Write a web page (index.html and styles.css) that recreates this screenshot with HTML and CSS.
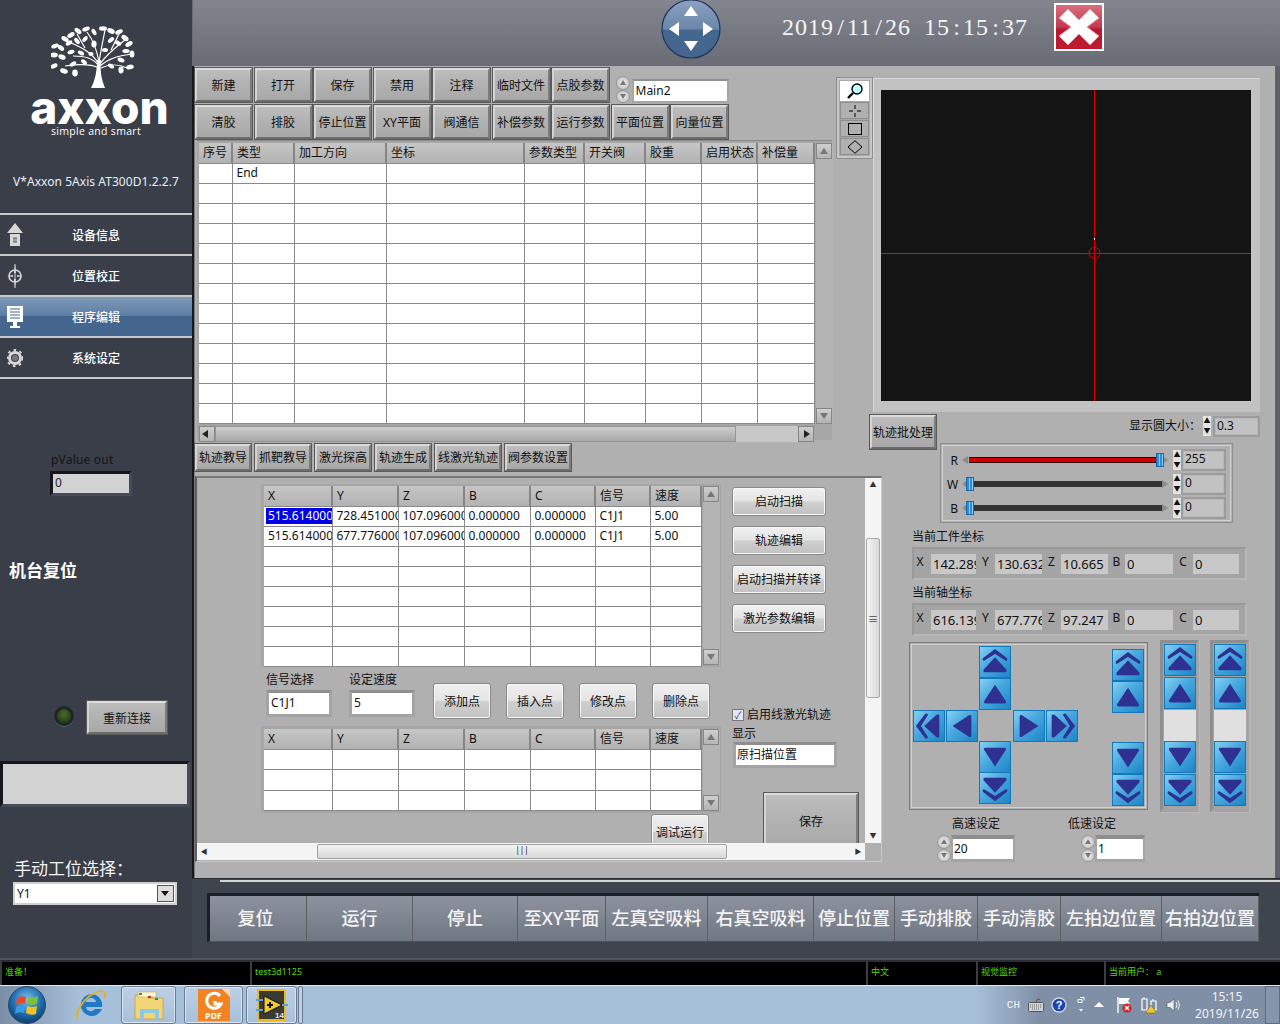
FILE: index.html
```html
<!DOCTYPE html>
<html lang="zh-CN">
<head>
  <meta charset="UTF-8">
  <title>Axxon 5Axis</title>
  <link rel="stylesheet" href="styles.css">
</head>
<body>

  <svg class="defs">
    <symbol id="arrow-one" viewBox="0 0 32 32">
      <path d="M16 6 L27.5 23.5 Q28.5 26 26 26 H6 Q3.5 26 4.5 23.5 Z" fill="#2e3192"/>
    </symbol>
    <symbol id="arrow-two" viewBox="0 0 32 32">
      <path d="M16 2 L29 12 Q30 14 28 15 L16 7.5 L4 15 Q2 14 3 12 Z" fill="#2e3192"/>
      <path d="M16 11 L28 24 Q29 27 27 27 H5 Q3 27 4 24 Z" fill="#2e3192"/>
    </symbol>
  </svg>

  <div class="app">
    <div class="upper">

      <aside class="side">
        <div class="logo">
          <svg class="tree" viewBox="0 0 84 62" width="84" height="62">
            <path d="M40 62 H54 C50 52 49 44 50 34 L46 34 C46 46 44 54 40 62 Z" fill="#fff"/>
            <g stroke="#fff" stroke-width="1.2" fill="none">
              <path d="M48 40 C42 32 34 30 22 30 M48 38 C40 26 32 22 18 16 M48 36 C46 24 42 14 36 6 M48 36 C50 24 52 14 54 4 M49 38 C56 28 64 22 74 14 M49 40 C58 32 68 30 80 28 M48 42 C40 38 28 38 14 40 M50 42 C58 38 68 38 76 42 M34 22 L26 8 M60 24 L68 8"/>
            </g>
            <g fill="#fff">
              <ellipse cx="14" cy="13" rx="4" ry="2.2" transform="rotate(30 14 13)"/>
              <ellipse cx="20" cy="9" rx="4" ry="2.2" transform="rotate(-30 20 9)"/>
              <ellipse cx="27" cy="5" rx="4" ry="2.2" transform="rotate(40 27 5)"/>
              <ellipse cx="35" cy="3" rx="4" ry="2.2" transform="rotate(-20 35 3)"/>
              <ellipse cx="43" cy="6" rx="3.5" ry="2" transform="rotate(60 43 6)"/>
              <ellipse cx="52" cy="2.5" rx="4" ry="2.2"/>
              <ellipse cx="60" cy="5" rx="4" ry="2.4" transform="rotate(25 60 5)"/>
              <ellipse cx="68" cy="6" rx="4" ry="2.2" transform="rotate(-25 68 6)"/>
              <ellipse cx="74" cy="12" rx="4" ry="2.4" transform="rotate(35 74 12)"/>
              <ellipse cx="78" cy="18" rx="4" ry="2.2" transform="rotate(-30 78 18)"/>
              <ellipse cx="81" cy="28" rx="2.4" ry="3.6"/>
              <ellipse cx="75" cy="25" rx="3.6" ry="2"/>
              <ellipse cx="67" cy="17" rx="3.6" ry="2" transform="rotate(30 67 17)"/>
              <ellipse cx="60" cy="14" rx="3.6" ry="2" transform="rotate(-40 60 14)"/>
              <ellipse cx="70" cy="34" rx="3.6" ry="2.2" transform="rotate(20 70 34)"/>
              <ellipse cx="79" cy="41" rx="3.8" ry="2.4" transform="rotate(-10 79 41)"/>
              <ellipse cx="70" cy="44" rx="2.6" ry="3.4"/>
              <ellipse cx="60" cy="40" rx="3.4" ry="2" transform="rotate(30 60 40)"/>
              <ellipse cx="4" cy="20" rx="4" ry="2.2" transform="rotate(-20 4 20)"/>
              <ellipse cx="10" cy="22" rx="3.6" ry="2.2" transform="rotate(40 10 22)"/>
              <ellipse cx="18" cy="17" rx="3.6" ry="2" transform="rotate(-30 18 17)"/>
              <ellipse cx="26" cy="15" rx="3.6" ry="2" transform="rotate(50 26 15)"/>
              <ellipse cx="34" cy="13" rx="3.4" ry="2" transform="rotate(-50 34 13)"/>
              <ellipse cx="3" cy="29" rx="3.8" ry="2.4"/>
              <ellipse cx="11" cy="31" rx="3.8" ry="2.4" transform="rotate(25 11 31)"/>
              <ellipse cx="20" cy="26" rx="3.6" ry="2" transform="rotate(-20 20 26)"/>
              <ellipse cx="30" cy="27" rx="3.4" ry="2" transform="rotate(30 30 27)"/>
              <ellipse cx="3" cy="40" rx="3.8" ry="2.2" transform="rotate(-25 3 40)"/>
              <ellipse cx="13" cy="45" rx="4" ry="2.4" transform="rotate(20 13 45)"/>
              <ellipse cx="22" cy="38" rx="3.6" ry="2" transform="rotate(-30 22 38)"/>
              <ellipse cx="24" cy="47" rx="2.8" ry="3.4"/>
              <ellipse cx="33" cy="36" rx="3.4" ry="2" transform="rotate(40 33 36)"/>
              <ellipse cx="43" cy="18" rx="2.6" ry="3.6"/>
              <ellipse cx="54" cy="24" rx="3" ry="2"/>
              <ellipse cx="40" cy="28" rx="2.6" ry="2"/>
            </g>
          </svg>
          <div class="brand">axxon</div>
          <div class="tagline">simple and smart</div>
        </div>

        <div class="version">V*Axxon 5Axis AT300D1.2.2.7</div>

        <nav class="menu">
          <div class="menu-row">
            <svg class="menu-icon" viewBox="0 0 16 24" width="16" height="24">
              <path d="M8 0 L16 10 H0 Z M3 11 H13 V23 H3 Z" fill="#d8d8d8"/>
              <path d="M6 14 H10 V20 H6 Z M8 14 V20 M6 17 H10" fill="#39404a" stroke="#d8d8d8" stroke-width=".8"/>
            </svg>
            <span>设备信息</span>
          </div>
          <div class="menu-row">
            <svg class="menu-icon" viewBox="0 0 16 24" width="16" height="24">
              <circle cx="8" cy="12" r="6" fill="none" stroke="#d8d8d8" stroke-width="1.6"/>
              <path d="M8 0 L9 9 H7 Z M8 24 L9 15 H7 Z M0 12 L6 11 V13 Z M16 12 L10 11 V13 Z" fill="#d8d8d8"/>
              <path d="M8 0 V24" stroke="#d8d8d8"/>
            </svg>
            <span>位置校正</span>
          </div>
          <div class="menu-row menu-row-on">
            <svg class="menu-icon" viewBox="0 0 16 22" width="16" height="22">
              <path d="M0 0 H16 V16 H0 Z" fill="#fff"/>
              <path d="M3 3 H13 M3 6 H13 M3 9 H13 M3 12 H13" stroke="#44668f"/>
              <path d="M6 16 H10 V20 H6 Z M3 20 H13 V22 H3 Z" fill="#fff"/>
            </svg>
            <span>程序编辑</span>
          </div>
          <div class="menu-row">
            <svg class="menu-icon" viewBox="0 0 16 22" width="16" height="22">
              <circle cx="8" cy="11" r="5.5" fill="none" stroke="#d8d8d8" stroke-width="3"/>
              <circle cx="8" cy="11" r="8" fill="none" stroke="#d8d8d8" stroke-width="2" stroke-dasharray="2.6 3.4"/>
              <circle cx="8" cy="11" r="3" fill="#767676"/>
            </svg>
            <span>系统设定</span>
          </div>
        </nav>

        <div class="pvalue">
          <div class="pvalue-label">pValue out</div>
          <div class="pvalue-field">0</div>
        </div>

        <div class="reset-title">机台复位</div>

        <div class="connect">
          <div class="led"></div>
          <button class="btn connect-btn">重新连接</button>
        </div>

        <div class="blank-display"></div>

        <div class="station-label">手动工位选择：</div>
        <div class="station-select">
          <span>Y1</span>
          <span class="station-arrow"></span>
        </div>
      </aside>

      <main class="work">
        <header class="topbar">
          <svg class="nav-ball" viewBox="0 0 60 60" width="60" height="60">
            <defs>
              <linearGradient id="ballTop" x1="0" y1="0" x2="0" y2="1">
                <stop offset="0" stop-color="#8ca2bf"/>
                <stop offset=".5" stop-color="#6a87aa"/>
                <stop offset=".52" stop-color="#44668f"/>
                <stop offset="1" stop-color="#44668f"/>
              </linearGradient>
            </defs>
            <circle cx="30" cy="30" r="29" fill="url(#ballTop)" stroke="#1e3560" stroke-width="1.2"/>
            <path d="M30 7 L37 17 H23 Z M30 52 L37 42 H23 Z M8 30 L18 23 V37 Z M52 30 L42 23 V37 Z" fill="#fff"/>
          </svg>
          <div class="clock">2019<span class="sep">/</span>11<span class="sep">/</span>26<span class="gap"></span>15<span class="sep">:</span>15<span class="sep">:</span>37</div>
          <svg class="close-btn" viewBox="0 0 50 48" width="50" height="48">
            <defs>
              <linearGradient id="closeFill" x1="0" y1="0" x2="0" y2="1">
                <stop offset="0" stop-color="#d9707f"/>
                <stop offset=".5" stop-color="#c43a50"/>
                <stop offset=".55" stop-color="#b8182e"/>
                <stop offset="1" stop-color="#c01a30"/>
              </linearGradient>
            </defs>
            <rect x="1" y="1" width="48" height="46" fill="url(#closeFill)" stroke="#fff" stroke-width="2"/>
            <path d="M14 6 L25 17 L36 6 L45 15 L33 24 L45 33 L36 42 L25 31 L14 42 L5 33 L17 24 L5 15 Z" fill="#fff" stroke="#e8a0aa" stroke-width="1" stroke-linejoin="round"/>
          </svg>
        </header>

        <div class="panel">

          <section class="prog">
            <div class="tool-grid">
              <button class="btn">新建</button>
              <button class="btn">打开</button>
              <button class="btn">保存</button>
              <button class="btn">禁用</button>
              <button class="btn">注释</button>
              <button class="btn">临时文件</button>
              <button class="btn">点胶参数</button>
              <div class="prog-name">
                <div class="spin-round"><span></span><span></span></div>
                <div class="name-field">Main2</div>
              </div>
              <button class="btn">清胶</button>
              <button class="btn">排胶</button>
              <button class="btn">停止位置</button>
              <button class="btn">XY平面</button>
              <button class="btn">阀通信</button>
              <button class="btn">补偿参数</button>
              <button class="btn">运行参数</button>
              <button class="btn">平面位置</button>
              <button class="btn">向量位置</button>
            </div>

            <div class="table-frame prog-frame">
              <div class="table-wrap">
                <table class="grid-table prog-table">
                  <thead>
                    <tr><th>序号</th><th>类型</th><th>加工方向</th><th>坐标</th><th>参数类型</th><th>开关阀</th><th>胶重</th><th>启用状态</th><th>补偿量</th></tr>
                  </thead>
                  <tbody>
                    <tr><td></td><td>End</td><td></td><td></td><td></td><td></td><td></td><td></td><td></td></tr>
                    <tr><td></td><td></td><td></td><td></td><td></td><td></td><td></td><td></td><td></td></tr>
                    <tr><td></td><td></td><td></td><td></td><td></td><td></td><td></td><td></td><td></td></tr>
                    <tr><td></td><td></td><td></td><td></td><td></td><td></td><td></td><td></td><td></td></tr>
                    <tr><td></td><td></td><td></td><td></td><td></td><td></td><td></td><td></td><td></td></tr>
                    <tr><td></td><td></td><td></td><td></td><td></td><td></td><td></td><td></td><td></td></tr>
                    <tr><td></td><td></td><td></td><td></td><td></td><td></td><td></td><td></td><td></td></tr>
                    <tr><td></td><td></td><td></td><td></td><td></td><td></td><td></td><td></td><td></td></tr>
                    <tr><td></td><td></td><td></td><td></td><td></td><td></td><td></td><td></td><td></td></tr>
                    <tr><td></td><td></td><td></td><td></td><td></td><td></td><td></td><td></td><td></td></tr>
                    <tr><td></td><td></td><td></td><td></td><td></td><td></td><td></td><td></td><td></td></tr>
                    <tr><td></td><td></td><td></td><td></td><td></td><td></td><td></td><td></td><td></td></tr>
                    <tr><td></td><td></td><td></td><td></td><td></td><td></td><td></td><td></td><td></td></tr>
                  </tbody>
                </table>
                <div class="vbar">
                  <div class="bar-btn bar-up"></div>
                  <div class="bar-btn bar-down"></div>
                </div>
              </div>
              <div class="hbar-big">
                <div class="bar-btn bar-left"></div>
                <div class="hbar-thumb"></div>
                <div class="bar-btn bar-right"></div>
              </div>
            </div>

            <div class="tabs">
              <button class="btn tab">轨迹教导</button>
              <button class="btn tab">抓靶教导</button>
              <button class="btn tab">激光探高</button>
              <button class="btn tab">轨迹生成</button>
              <button class="btn tab tab-wide">线激光轨迹</button>
              <button class="btn tab tab-wide">阀参数设置</button>
            </div>
          </section>

          <section class="viewer">
            <div class="palette">
              <div class="pal-item pal-on">
                <svg viewBox="0 0 18 18" width="18" height="18"><circle cx="11" cy="7" r="5" fill="#bff" stroke="#000" stroke-width="1.4"/><path d="M7 11 L2 16" stroke="#000" stroke-width="2.4"/></svg>
              </div>
              <div class="pal-item">
                <svg viewBox="0 0 14 14" width="14" height="14"><path d="M7 1 V5 M7 9 V13 M1 7 H5 M9 7 H13" stroke="#000"/></svg>
              </div>
              <div class="pal-item">
                <svg viewBox="0 0 14 12" width="14" height="12"><rect x=".5" y=".5" width="13" height="11" fill="none" stroke="#000"/></svg>
              </div>
              <div class="pal-item">
                <svg viewBox="0 0 16 14" width="16" height="14"><path d="M8 .7 L15 7 L8 13.3 L1 7 Z" fill="none" stroke="#000"/></svg>
              </div>
            </div>
            <div class="graph-frame">
              <svg class="graph" viewBox="0 0 370 311" width="370" height="311">
                <rect width="370" height="311" fill="#141414"/>
                <path d="M0 163.5 H370" stroke="#4c4c4c"/>
                <path d="M213.5 0 V311" stroke="#e00000"/>
                <circle cx="213.5" cy="163" r="5.5" fill="none" stroke="#e00000"/>
                <path d="M206 163.5 H221" stroke="#e00000"/>
                <rect x="213" y="148" width="1" height="2" fill="#eee"/>
              </svg>
            </div>
          </section>

          <section class="tabview">
            <div class="tabview-main">
              <div class="tab-content">
                <div class="tab-left">
                  <div class="table-frame points-frame">
                    <table class="grid-table points-table">
                      <thead>
                        <tr><th>X</th><th>Y</th><th>Z</th><th>B</th><th>C</th><th>信号</th><th>速度</th></tr>
                      </thead>
                      <tbody>
                        <tr><td><span class="cell-on">515.614000</span></td><td>728.451000</td><td>107.096000</td><td>0.000000</td><td>0.000000</td><td>C1J1</td><td>5.00</td></tr>
                        <tr><td>515.614000</td><td>677.776000</td><td>107.096000</td><td>0.000000</td><td>0.000000</td><td>C1J1</td><td>5.00</td></tr>
                        <tr><td></td><td></td><td></td><td></td><td></td><td></td><td></td></tr>
                        <tr><td></td><td></td><td></td><td></td><td></td><td></td><td></td></tr>
                        <tr><td></td><td></td><td></td><td></td><td></td><td></td><td></td></tr>
                        <tr><td></td><td></td><td></td><td></td><td></td><td></td><td></td></tr>
                        <tr><td></td><td></td><td></td><td></td><td></td><td></td><td></td></tr>
                        <tr><td></td><td></td><td></td><td></td><td></td><td></td><td></td></tr>
                      </tbody>
                    </table>
                    <div class="vbar">
                      <div class="bar-btn bar-up"></div>
                      <div class="bar-btn bar-down"></div>
                    </div>
                  </div>

                  <div class="point-form">
                    <div class="form-group">
                      <label>信号选择</label>
                      <div class="form-field">C1J1</div>
                    </div>
                    <div class="form-group">
                      <label>设定速度</label>
                      <div class="form-field">5</div>
                    </div>
                    <button class="sys-btn point-btn point-first">添加点</button>
                    <button class="sys-btn point-btn">插入点</button>
                    <button class="sys-btn point-btn">修改点</button>
                    <button class="sys-btn point-btn">删除点</button>
                  </div>

                  <div class="table-frame points-frame small-frame">
                    <table class="grid-table points-table">
                      <thead>
                        <tr><th>X</th><th>Y</th><th>Z</th><th>B</th><th>C</th><th>信号</th><th>速度</th></tr>
                      </thead>
                      <tbody>
                        <tr><td></td><td></td><td></td><td></td><td></td><td></td><td></td></tr>
                        <tr><td></td><td></td><td></td><td></td><td></td><td></td><td></td></tr>
                        <tr><td></td><td></td><td></td><td></td><td></td><td></td><td></td></tr>
                      </tbody>
                    </table>
                    <div class="vbar">
                      <div class="bar-btn bar-up"></div>
                      <div class="bar-btn bar-down"></div>
                    </div>
                  </div>

                  <button class="sys-btn point-btn debug-btn">调试运行</button>
                </div>

                <div class="tab-right">
                  <button class="sys-btn scan-btn">启动扫描</button>
                  <button class="sys-btn scan-btn">轨迹编辑</button>
                  <button class="sys-btn scan-btn">启动扫描并转译</button>
                  <button class="sys-btn scan-btn">激光参数编辑</button>
                  <div class="check-row"><span class="check-box">✓</span>启用线激光轨迹</div>
                  <div class="show-label">显示</div>
                  <div class="show-field">原扫描位置</div>
                  <button class="btn save-btn">保存</button>
                </div>
              </div>
              <div class="vbar-light">
                <span class="mini-arrow">▲</span>
                <div class="vbar-thumb">≡</div>
                <span class="mini-arrow">▼</span>
              </div>
            </div>
            <div class="hbar-light">
              <span class="mini-arrow">◀</span>
              <div class="hbar-light-thumb">|||</div>
              <span class="mini-arrow">▶</span>
            </div>
          </section>

          <section class="controls">
            <div class="ctrl-head">
              <button class="btn batch-btn">轨迹批处理</button>
              <span class="circle-label">显示圆大小：</span>
              <div class="spin-small"><span>▲</span><span>▼</span></div>
              <div class="ghost-field circle-field">0.3</div>
            </div>

            <div class="rgb-box">
              <div class="rgb-row">
                <span class="rgb-name">R</span>
                <span class="tri tri-l"></span>
                <div class="slider slider-full"><span class="thumb"></span></div>
                <span class="tri tri-r"></span>
                <div class="spin-small"><span>▲</span><span>▼</span></div>
                <div class="ghost-field rgb-field">255</div>
              </div>
              <div class="rgb-row">
                <span class="rgb-name">W</span>
                <span class="tri tri-l"></span>
                <div class="slider"><span class="thumb"></span></div>
                <span class="tri tri-r"></span>
                <div class="spin-small"><span>▲</span><span>▼</span></div>
                <div class="ghost-field rgb-field">0</div>
              </div>
              <div class="rgb-row">
                <span class="rgb-name">B</span>
                <span class="tri tri-l"></span>
                <div class="slider"><span class="thumb"></span></div>
                <span class="tri tri-r"></span>
                <div class="spin-small"><span>▲</span><span>▼</span></div>
                <div class="ghost-field rgb-field">0</div>
              </div>
            </div>

            <div class="coord-title">当前工件坐标</div>
            <div class="coord-box">
              <span>X</span><div class="coord-val">142.289</div>
              <span>Y</span><div class="coord-val">130.632</div>
              <span>Z</span><div class="coord-val">10.665</div>
              <span>B</span><div class="coord-val">0</div>
              <span>C</span><div class="coord-val">0</div>
            </div>
            <div class="coord-title coord-title-2">当前轴坐标</div>
            <div class="coord-box">
              <span>X</span><div class="coord-val">616.139</div>
              <span>Y</span><div class="coord-val">677.776</div>
              <span>Z</span><div class="coord-val">97.247</div>
              <span>B</span><div class="coord-val">0</div>
              <span>C</span><div class="coord-val">0</div>
            </div>

            <div class="jog-row">
              <div class="jog-pad">
                <div class="jog-cross">
                  <div class="jog jog-n2"><svg class="up"><use href="#arrow-two"/></svg></div>
                  <div class="jog jog-n1"><svg class="up"><use href="#arrow-one"/></svg></div>
                  <div class="jog jog-w2"><svg class="left"><use href="#arrow-two"/></svg></div>
                  <div class="jog jog-w1"><svg class="left"><use href="#arrow-one"/></svg></div>
                  <div class="jog jog-e1"><svg class="right"><use href="#arrow-one"/></svg></div>
                  <div class="jog jog-e2"><svg class="right"><use href="#arrow-two"/></svg></div>
                  <div class="jog jog-s1"><svg class="down"><use href="#arrow-one"/></svg></div>
                  <div class="jog jog-s2"><svg class="down"><use href="#arrow-two"/></svg></div>
                </div>
                <div class="jog-col">
                  <div class="jog"><svg class="up"><use href="#arrow-two"/></svg></div>
                  <div class="jog"><svg class="up"><use href="#arrow-one"/></svg></div>
                  <div class="jog-gap"></div>
                  <div class="jog"><svg class="down"><use href="#arrow-one"/></svg></div>
                  <div class="jog"><svg class="down"><use href="#arrow-two"/></svg></div>
                </div>
              </div>
              <div class="jog-strip">
                <div class="jog"><svg class="up"><use href="#arrow-two"/></svg></div>
                <div class="jog"><svg class="up"><use href="#arrow-one"/></svg></div>
                <div class="strip-mid"></div>
                <div class="jog"><svg class="down"><use href="#arrow-one"/></svg></div>
                <div class="jog"><svg class="down"><use href="#arrow-two"/></svg></div>
              </div>
              <div class="jog-strip jog-strip-2">
                <div class="jog"><svg class="up"><use href="#arrow-two"/></svg></div>
                <div class="jog"><svg class="up"><use href="#arrow-one"/></svg></div>
                <div class="strip-mid"></div>
                <div class="jog"><svg class="down"><use href="#arrow-one"/></svg></div>
                <div class="jog"><svg class="down"><use href="#arrow-two"/></svg></div>
              </div>
            </div>

            <div class="speed-row">
              <div class="speed speed-high">
                <div class="speed-label">高速设定</div>
                <div class="speed-input">
                  <div class="spin-round"><span></span><span></span></div>
                  <div class="speed-field">20</div>
                </div>
              </div>
              <div class="speed speed-low">
                <div class="speed-label">低速设定</div>
                <div class="speed-input">
                  <div class="spin-round"><span></span><span></span></div>
                  <div class="speed-field">1</div>
                </div>
              </div>
            </div>
          </section>
        </div>

        <footer class="actionbar">
          <div class="action-line"></div>
          <div class="action-box">
            <div class="action">复位</div>
            <div class="action">运行</div>
            <div class="action">停止</div>
            <div class="action">至XY平面</div>
            <div class="action">左真空吸料</div>
            <div class="action">右真空吸料</div>
            <div class="action">停止位置</div>
            <div class="action">手动排胶</div>
            <div class="action">手动清胶</div>
            <div class="action">左拍边位置</div>
            <div class="action">右拍边位置</div>
          </div>
        </footer>
      </main>
    </div>

    <div class="statusbar">
      <div class="status">准备！</div>
      <div class="status">test3d1125</div>
      <div class="status">中文</div>
      <div class="status">视觉监控</div>
      <div class="status">当前用户： a</div>
    </div>

    <div class="taskbar">
      <svg class="start-orb" viewBox="0 0 38 38" width="38" height="38">
        <defs>
          <radialGradient id="orb" cx=".5" cy=".35" r=".7">
            <stop offset="0" stop-color="#7ec0ea"/>
            <stop offset=".55" stop-color="#1e6fb0"/>
            <stop offset="1" stop-color="#0a3560"/>
          </radialGradient>
        </defs>
        <circle cx="19" cy="19" r="18.5" fill="url(#orb)" stroke="#2c4a66"/>
        <path d="M9 12 Q13 9 18 11 L17 18 Q12 16 8 19 Z" fill="#e8482c"/>
        <path d="M20 11 Q25 13 30 10 L29 18 Q24 20 19 18 Z" fill="#7cc23c"/>
        <path d="M8 21 Q12 18 17 20 L16 27 Q11 25 7 28 Z" fill="#3a9ae8"/>
        <path d="M19 20 Q24 22 29 20 L28 28 Q23 30 18 27 Z" fill="#f4c020"/>
      </svg>
      <svg class="ie-icon" viewBox="0 0 34 34" width="34" height="34">
        <path d="M18 6 A11 11 0 1 0 29 21 H22 A5 5 0 0 1 13 19 H29 A11 11 0 0 0 18 6 Z M13 14 A5 4 0 0 1 23 14 Z" fill="#1f78c8" fill-rule="evenodd"/>
        <path d="M5 31 C0 28 10 10 22 5 C30 1 34 4 31 10" fill="none" stroke="#e8b020" stroke-width="1.8"/>
      </svg>
      <div class="task-tile task-folder">
        <svg viewBox="0 0 30 32" width="30" height="32">
          <path d="M1 6 H12 L14 9 H29 V30 H1 Z" fill="#f2d676" stroke="#c8a850"/>
          <path d="M4 3 H22 V8 H4 Z" fill="#fff7d8" stroke="#c8a850" stroke-width=".6"/>
          <path d="M5 4 H8 V6 H5 Z" fill="#20a040"/>
          <path d="M14 7 H17 V9 H14 Z" fill="#d03030"/>
          <path d="M21 9 H24 V11 H21 Z" fill="#2080d0"/>
          <path d="M6 20 H25 V30 H21 V24 H10 V30 H6 Z" fill="#8cc8e8"/>
        </svg>
      </div>
      <div class="task-tile task-pdf">
        <div class="pdf-icon">
          <svg viewBox="0 0 32 22" width="32" height="22">
            <path d="M24 0 H32 V8 Z" fill="#fbd7b0"/>
            <path d="M22 7 A7.5 7.5 0 1 0 23 15 H17 V12" fill="none" stroke="#fff" stroke-width="3"/>
          </svg>
          <span>PDF</span>
        </div>
      </div>
      <div class="task-tile task-lv">
        <svg viewBox="0 0 32 32" width="32" height="32">
          <rect x="2" y="1" width="27" height="30" fill="#3a3a34" stroke="#f0b818" stroke-width="2"/>
          <path d="M8 7 L26 16 L8 25 Z" fill="#f0c830" stroke="#111"/>
          <path d="M14 13 V19 M11 16 H17" stroke="#111" stroke-width="2"/>
          <path d="M0 11 H7 M0 21 H7 M26 16 H32" stroke="#5aa0d8" stroke-width="2"/>
          <text x="19" y="29" class="lv-num">14</text>
        </svg>
      </div>
      <div class="task-end"></div>

      <div class="tray">
        <span class="tray-lang">CH</span>
        <svg viewBox="0 0 16 14" width="16" height="14"><rect x=".5" y="4.5" width="15" height="9" rx="1" fill="#d0d4da" stroke="#555"/><path d="M2 7 H14 M2 9 H14 M4 11 H12" stroke="#666" stroke-dasharray="1 1"/><path d="M8 4 Q8 1 12 1" stroke="#555" fill="none"/></svg>
        <svg viewBox="0 0 16 16" width="16" height="16"><circle cx="8" cy="8" r="7" fill="#1c44b0" stroke="#cfd6e4" stroke-width="1.4"/><text x="8" y="12" class="help-q">?</text></svg>
        <svg viewBox="0 0 8 16" width="8" height="16"><path d="M1 2.5 H5 V5.5 H1 Z M3 .5 H7 V3.5" fill="none" stroke="#fff"/><path d="M2 12 H6 L4 14.5 Z" fill="#fff"/></svg>
        <svg viewBox="0 0 10 6" width="10" height="6"><path d="M5 0 L10 5 H0 Z" fill="#fff"/></svg>
        <svg viewBox="0 0 16 18" width="16" height="18"><path d="M2 1 V17" stroke="#fff" stroke-width="1.4"/><path d="M3 2 H14 L12 5 L14 8 H3 Z" fill="#fff"/><circle cx="11" cy="12" r="4.6" fill="#d82020"/><path d="M9 10 L13 14 M13 10 L9 14" stroke="#fff" stroke-width="1.4"/></svg>
        <svg viewBox="0 0 16 18" width="16" height="18"><path d="M1 3 H6 V14 H1 Z M10 5 H15 V14 H10 Z" fill="none" stroke="#fff" stroke-width="1.2"/><path d="M3 1 V3 M12 3 V5" stroke="#fff"/><path d="M10 9 L15.5 17 H4.5 Z" fill="#f0c820" stroke="#555" stroke-width=".5"/></svg>
        <svg viewBox="0 0 16 16" width="16" height="16"><path d="M1 5.5 H4 L8 2 V14 L4 10.5 H1 Z" fill="#e8edf3" stroke="#555" stroke-width=".6"/><path d="M10 5 Q12 8 10 11 M12 3.5 Q15 8 12 12.5" fill="none" stroke="#e8edf3"/></svg>
        <div class="tray-clock">
          <div>15:15</div>
          <div>2019/11/26</div>
        </div>
      </div>
      <div class="show-desktop"></div>
    </div>
  </div>

</body>
</html>
```

FILE: styles.css
```css
* {
  box-sizing: border-box;
}
html, body {
  margin: 0;
  padding: 0;
}
body {
  width: 1280px;
  height: 1024px;
  overflow: hidden;
  background: #b0b0b0;
  color: #111;
  font-family: "Noto Sans", "Noto Sans CJK SC", sans-serif;
  font-size: 12px;
}
.defs {
  display: none;
}
button {
  font: inherit;
  color: #111;
  padding: 0;
  cursor: pointer;
}

.app {
  display: flex;
  flex-direction: column;
  height: 1024px;
}
.upper {
  display: flex;
  height: 958px;
}

/* left column */
.side {
  width: 192px;
  flex: none;
  background: #393e48;
  color: #fff;
}
.logo {
  padding-top: 26px;
  height: 140px;
  display: flex;
  flex-direction: column;
  align-items: center;
}
.tree {
  margin-left: -6px;
}
.brand {
  font-family: Inter, "Noto Sans", sans-serif;
  font-weight: 800;
  font-size: 46px;
  line-height: 27px;
  height: 27px;
  letter-spacing: 0;
  margin: 6px 0 0 7px;
}
.tagline {
  font-family: "Open Sans", "Noto Sans", sans-serif;
  font-size: 10.5px;
  line-height: 14px;
  letter-spacing: .3px;
  margin-top: 3px;
}
.version {
  font-size: 12px;
  line-height: 16px;
  margin-top: 34px;
  text-align: center;
  color: #e6eef6;
  letter-spacing: .05px;
}
.menu {
  margin-top: 23px;
  border-bottom: 2px solid #c8c8c8;
}
.menu-row {
  height: 41px;
  border-top: 2px solid #c8c8c8;
  display: flex;
  align-items: center;
  padding-left: 7px;
  font-weight: 500;
}
.menu-row span {
  margin-left: 49px;
}
.menu-row-on {
  background: linear-gradient(#7f9ab8, #5d7ea4 48%, #45668f 50%, #45668f);
}
.menu-icon {
  flex: none;
}
.pvalue {
  margin: 73px 0 0 50px;
}
.pvalue-label {
  color: #151515;
  font-size: 12px;
  line-height: 16px;
  padding-left: 1px;
  letter-spacing: .2px;
}
.pvalue-field {
  width: 82px;
  height: 25px;
  margin-top: 3px;
  background: #d2d2d2;
  border: 3px solid;
  border-color: #14181e #454b57 #454b57 #14181e;
  color: #222;
  padding-left: 2px;
  line-height: 18px;
}
.reset-title {
  margin: 63px 0 0 9px;
  font-size: 17px;
  line-height: 24px;
  font-weight: 700;
}
.connect {
  display: flex;
  align-items: center;
  margin: 117px 0 0 54px;
}
.led {
  width: 20px;
  height: 20px;
  margin-top: -3px;
  border-radius: 50%;
  border: 3px solid #20252c;
  background: radial-gradient(circle at 50% 40%, #4a6b2a, #203a12 80%);
  box-shadow: 0 1px 0 #5a606c;
}
.connect-btn {
  width: 82px;
  height: 35px;
  margin-left: 12px;
}
.blank-display {
  width: 190px;
  height: 46px;
  margin-top: 26px;
  background: #d2d2d2;
  border: 3px solid;
  border-color: #14181e #454b57 #454b57 #14181e;
}
.station-label {
  margin: 50px 0 0 14px;
  font-size: 17px;
  line-height: 24px;
  color: #f2f2f2;
}
.station-select {
  width: 164px;
  height: 23px;
  margin: 1px 0 0 13px;
  background: #fff;
  border: 2px solid #d0d0d0;
  color: #111;
  display: flex;
  align-items: center;
  justify-content: space-between;
  padding: 0 1px 0 2px;
}
.station-arrow {
  width: 17px;
  height: 17px;
  background: #ddd;
  border: 1px solid #555;
  position: relative;
}
.station-arrow::after {
  content: "";
  position: absolute;
  left: 3px;
  top: 5px;
  border: 4px solid transparent;
  border-top: 5px solid #111;
  border-bottom: 0;
}

/* main column */
.work {
  width: 1088px;
  flex: none;
  display: flex;
  flex-direction: column;
}
.topbar {
  height: 66px;
  background: linear-gradient(#83868f, #696c74);
  border-left: 1px solid #6a6d75;
  display: flex;
  align-items: flex-start;
  padding-left: 468px;
}
.nav-ball {
  margin-top: -1px;
}
.clock {
  margin: 13px 0 0 61px;
  width: 245px;
  font-family: "Liberation Serif", serif;
  font-size: 24px;
  line-height: 28px;
  letter-spacing: 1px;
  color: #f4f4f4;
  white-space: nowrap;
}
.sep {
  display: inline-block;
  width: 13px;
  text-align: center;
  letter-spacing: 0;
}
.gap {
  display: inline-block;
  width: 13px;
}
.close-btn {
  margin: 3px 0 0 27px;
}

.panel {
  height: 812px;
  display: grid;
  grid-template-columns: 641px 46px 393px 5px;
  grid-template-rows: 346px 64px 402px;
  background: #b0b0b0;
  border-left: 3px solid;
  border-image: linear-gradient(90deg, #15181d 0 2px, #7a7a7a 2px) 3;
  box-shadow: inset -5px 0 0 #5d6069;
}

/* bevelled LabVIEW button */
.btn {
  background: linear-gradient(#bdbdbd, #b2b2b2 45%, #a8a8a8);
  border: 3px solid;
  border-color: #dcdcdc #7c7c7c #6c6c6c #d4d4d4;
  outline: 1px solid #5a5a5a;
  outline-offset: -1px;
  white-space: nowrap;
  overflow: hidden;
  line-height: 14px;
  padding-top: 2px;
}
.sys-btn {
  background: linear-gradient(#f0f0f0, #e4e4e4 48%, #cfcfcf 52%, #c2c2c2);
  border: 1px solid #8a8a8a;
  border-radius: 3px;
  box-shadow: inset 0 0 0 1px #f8f8f8;
}

.prog {
  grid-column: 1;
  grid-row: 1 / span 2;
}
.tool-grid {
  display: grid;
  grid-template-columns: repeat(9, 59.5px);
  grid-auto-rows: 36px;
  gap: 1px 0;
  margin: 1px 0 0 -1px;
}
.tool-grid .btn {
  width: 59px;
}
.prog-name {
  grid-column: span 2;
  display: flex;
  align-items: flex-end;
  padding-left: 5px;
}
.spin-round {
  width: 14px;
  height: 27px;
  display: flex;
  flex-direction: column;
  flex: none;
}
.spin-round span {
  flex: 1;
  background: radial-gradient(ellipse at 50% 50%, #f0f0f0, #b8b8b8);
  border: 1px solid #9a9a9a;
  border-radius: 50%;
  position: relative;
}
.spin-round span::after {
  content: "";
  position: absolute;
  left: 3px;
  top: 3px;
  border: 3px solid transparent;
  border-bottom: 5px solid #777;
  border-top: 0;
}
.spin-round span + span::after {
  border-top: 5px solid #777;
  border-bottom: 0;
}
.name-field {
  width: 97px;
  height: 24px;
  margin: 0 0 0 2px;
  background: #fff;
  border: 2px solid #a6a6a6;
  border-top-color: #8f8f8f;
  padding-left: 2px;
  line-height: 19px;
}
.table-frame {
  background: #a6a6a6;
}
.prog-frame {
  width: 635px;
  height: 300px;
  margin: 0 0 0 2px;
  padding: 3px 2px;
  box-shadow: inset 0 1px 0 #8a8a8a;
}
.table-wrap {
  display: flex;
}
.grid-table {
  border-collapse: collapse;
  table-layout: fixed;
  background: #fff;
  color: #111;
}
.grid-table th {
  height: 19px;
  padding: 0 0 2px 4px;
  background: linear-gradient(#c6c6c6, #b2b2b2);
  border-right: 2px solid #858585;
  border-bottom: 1px solid #8a8a8a;
  font-weight: 400;
  text-align: left;
  overflow: hidden;
  white-space: nowrap;
}
.grid-table td {
  height: 20px;
  padding: 0 0 2px 4px;
  border-right: 1px solid #8a8a8a;
  border-bottom: 1px solid #8a8a8a;
  overflow: hidden;
  white-space: nowrap;
  line-height: 14px;
}
.prog-table {
  width: 615px;
}
.prog-table th:nth-child(1) { width: 33px; }
.prog-table th:nth-child(2) { width: 62px; }
.prog-table th:nth-child(3) { width: 92px; }
.prog-table th:nth-child(4) { width: 138px; }
.prog-table th:nth-child(5) { width: 60px; }
.prog-table th:nth-child(6) { width: 61px; }
.prog-table th:nth-child(7) { width: 56px; }
.prog-table th:nth-child(8) { width: 56px; }
.prog-table th:nth-child(9) { width: 57px; }
.vbar {
  width: 17px;
  flex: none;
  margin-left: 1px;
  display: flex;
  flex-direction: column;
  justify-content: space-between;
  background: #b4b4b4;
}
.bar-btn {
  width: 16px;
  height: 16px;
  background: linear-gradient(#cfcfcf, #b4b4b4);
  border: 1px solid #868686;
  position: relative;
  flex: none;
}
.bar-btn::after {
  content: "";
  position: absolute;
  left: 3px;
  top: 4px;
  border: 4px solid transparent;
}
.bar-up::after {
  border-bottom: 6px solid #777;
  border-top: 0;
}
.bar-down::after {
  border-top: 6px solid #777;
  border-bottom: 0;
}
.bar-left::after {
  left: 2px;
  top: 3px;
  border-right: 6px solid #222;
  border-left: 0;
}
.bar-right::after {
  left: 5px;
  top: 3px;
  border-left: 6px solid #222;
  border-right: 0;
}
.hbar-big {
  width: 615px;
  height: 16px;
  margin-top: 2px;
  display: flex;
  background: #c8c8c8;
}
.hbar-thumb {
  width: 521px;
  margin-right: auto;
  background: linear-gradient(#cdcdcd, #a8a8a8);
  border: 1px solid #949494;
}
.tabs {
  display: flex;
  gap: 2px;
  margin: 3px 0 0 -1px;
}
.tab {
  width: 58px;
  height: 29px;
  padding-top: 0;
}
.tab-wide {
  width: 68px;
}

/* camera view */
.viewer {
  grid-column: 2 / span 2;
  grid-row: 1;
  display: flex;
  align-items: flex-start;
  padding: 12px 0 0 1px;
}
.palette {
  width: 35px;
  height: 80px;
  background: #a8a8a8;
  border: 2px solid #c8c8c8;
  outline: 1px solid #8e8e8e;
  display: flex;
  flex-direction: column;
  gap: 1px;
  padding: 1px;
}
.pal-item {
  flex: 1;
  display: flex;
  align-items: center;
  justify-content: center;
  background: #b0b0b0;
  border: 1px solid #8e8e8e;
}
.pal-on {
  background: #fff;
  border-color: #fff;
}
.graph-frame {
  margin-left: 1px;
  width: 387px;
  height: 334px;
  padding: 11px 0 0 7px;
  background: #c2c2c2;
  border-left: 1px solid #d8d8d8;
  border-top: 1px solid #d8d8d8;
}
.graph {
  display: block;
}

/* lower tabbed panel */
.tabview {
  grid-column: 1 / span 2;
  grid-row: 3;
  height: 386px;
  border-top: 2px solid #777;
  border-left: 2px solid #5e5e5e;
  border-right: 1px solid #c8c8c8;
  border-bottom: 1px solid #c8c8c8;
  display: flex;
  flex-direction: column;
}
.tabview-main {
  height: 365px;
  display: flex;
}
.tab-content {
  width: 668px;
  height: 365px;
  overflow: hidden;
  display: flex;
  padding-left: 64px;
}
.tab-left {
  width: 460px;
  flex: none;
  padding-top: 6px;
}
.points-frame {
  width: 460px;
  height: 183px;
  padding: 2px 1px 2px 3px;
  display: flex;
}
.small-frame {
  height: 87px;
  padding-top: 3px;
}
.points-table {
  width: 437px;
}
.points-table th:nth-child(1) { width: 68px; }
.points-table th:nth-child(2) { width: 66px; }
.points-table th:nth-child(3) { width: 66px; }
.points-table th:nth-child(4) { width: 66px; }
.points-table th:nth-child(5) { width: 65px; }
.points-table th:nth-child(6) { width: 55px; }
.points-table th:nth-child(7) { width: 51px; }
.points-table .cell-on {
  display: block;
  margin: 0 0 0 -2px;
  background: #0000e6;
  color: #fff;
  padding-left: 2px;
  height: 16px;
  line-height: 15px;
  overflow: hidden;
}
.point-form {
  display: flex;
  height: 59px;
  padding: 6px 0 0 5px;
}
.form-group {
  width: 66px;
  flex: none;
  margin-right: 16px;
}
.form-group + .form-group {
  margin-left: 1px;
}
.form-group label {
  display: block;
  line-height: 14px;
}
.form-field {
  height: 27px;
  margin-top: 3px;
  background: #fff;
  border: 3px solid #a4a4a4;
  border-top-color: #8f8f8f;
  padding-left: 2px;
  line-height: 20px;
}
.point-btn {
  width: 58px;
  height: 36px;
  flex: none;
  margin: 10px 15px 0 0;
}
.point-first {
  margin-left: 2px;
}
.debug-btn {
  display: block;
  margin: 1px 0 0 390px;
}
.tab-right {
  width: 130px;
  flex: none;
  margin-left: 11px;
  padding-top: 9px;
}
.scan-btn {
  display: block;
  width: 94px;
  height: 29px;
  margin-bottom: 10px;
  padding-bottom: 2px;
}
.check-row {
  margin-top: 75px;
  line-height: 14px;
  display: flex;
  align-items: center;
  white-space: nowrap;
}
.check-box {
  width: 12px;
  height: 12px;
  margin-right: 3px;
  background: #e4e8f0;
  border: 1px solid #777;
  color: #2c3e80;
  font-size: 10px;
  line-height: 10px;
  text-align: center;
}
.show-label {
  margin-top: 5px;
  line-height: 14px;
}
.show-field {
  width: 104px;
  height: 26px;
  margin: 1px 0 0 1px;
  background: #fff;
  border: 3px solid #a4a4a4;
  border-top-color: #8f8f8f;
  padding-left: 1px;
  line-height: 19px;
}
.save-btn {
  display: block;
  width: 96px;
  height: 60px;
  margin: 24px 0 0 31px;
  padding-top: 0;
}
.vbar-light {
  width: 16px;
  margin-left: 1px;
  background: #f4f4f4;
  display: flex;
  flex-direction: column;
  align-items: center;
}
.vbar-thumb {
  width: 14px;
  height: 160px;
  margin: 46px 0 auto;
  background: linear-gradient(90deg, #f4f4f4, #d8d8d8);
  border: 1px solid #a8a8a8;
  border-radius: 2px;
  display: flex;
  align-items: center;
  justify-content: center;
  font-size: 10px;
  color: #444;
}
.mini-arrow {
  font-size: 7px;
  line-height: 14px;
  color: #333;
  flex: none;
  width: 14px;
  text-align: center;
}
.hbar-light {
  height: 17px;
  width: 668px;
  background: #f4f4f4;
  display: flex;
  align-items: center;
}
.hbar-light-thumb {
  width: 410px;
  height: 15px;
  margin: 0 auto 0 106px;
  background: linear-gradient(#f4f4f4, #d8d8d8);
  border: 1px solid #a0a0a0;
  border-radius: 2px;
  font-size: 8px;
  line-height: 10px;
  text-align: center;
}

/* right controls */
.controls {
  grid-column: 3;
  grid-row: 2 / span 2;
}
.ctrl-head {
  height: 31px;
  display: flex;
  align-items: flex-start;
}
.batch-btn {
  width: 68px;
  height: 36px;
  margin: 2px 0 0 -13px;
  flex: none;
  position: relative;
  z-index: 1;
}
.circle-label {
  margin: 6px 2px 0 auto;
  line-height: 16px;
}
.spin-small {
  width: 8px;
  display: flex;
  flex-direction: column;
  background: #e4e4e4;
  font-size: 7px;
  line-height: 10px;
  color: #111;
  text-align: center;
  margin-top: 4px;
  overflow: hidden;
  flex: none;
}
.spin-small span {
  display: block;
  height: 10px;
}
.ghost-field {
  background: #c2c2c2;
  border: 2px solid #9c9c9c;
  box-shadow: inset 0 0 0 1px #b8b8b8;
  padding-left: 2px;
}
.circle-field {
  width: 47px;
  height: 21px;
  margin: 4px 15px 0 2px;
  line-height: 16px;
}
.rgb-box {
  width: 293px;
  height: 80px;
  margin-left: 58px;
  padding: 3px 4px;
  border: 3px double #d2d2d2;
  outline: 1px solid #8e8e8e;
  outline-offset: -1px;
  display: flex;
  flex-direction: column;
  gap: 2px;
}
.rgb-row {
  height: 22px;
  display: flex;
  align-items: center;
}
.rgb-name {
  width: 11px;
  flex: none;
  text-align: right;
  font-size: 12px;
}
.tri {
  width: 0;
  height: 0;
  border: 4px solid transparent;
  flex: none;
}
.tri-l {
  border-right: 6px solid #8a8a8a;
  border-left: 0;
  margin-left: 4px;
}
.tri-r {
  border-left: 6px solid #8a8a8a;
  border-right: 0;
  margin-right: 2px;
}
.slider {
  width: 193px;
  height: 6px;
  background: #333;
  position: relative;
  flex: none;
  margin-left: 1px;
}
.slider-full {
  width: 188px;
  margin-right: 5px;
  background: #d40000;
  border-top: 1px solid #300;
  border-bottom: 1px solid #300;
}
.thumb {
  position: absolute;
  left: -3px;
  top: -4px;
  width: 8px;
  height: 14px;
  background: repeating-linear-gradient(90deg, #2a8fe0 0 2px, #8fd0ff 2px 3px);
  border: 1px solid #1a68a8;
}
.slider-full .thumb {
  left: auto;
  right: -7px;
  top: -5px;
}
.rgb-row .spin-small {
  margin: 0 0 0 3px;
  height: 20px;
}
.rgb-field {
  width: 47px;
  height: 22px;
  line-height: 15px;
}
.coord-title {
  margin: 6px 0 0 30px;
  line-height: 16px;
}
.coord-title-2 {
  margin-top: 5px;
}
.coord-box {
  width: 335px;
  height: 33px;
  margin: 2px 0 0 30px;
  padding-top: 5px;
  background: #a4a4a4;
  border-top: 2px solid #9a9a9a;
  border-left: 2px solid #9a9a9a;
  border-right: 2px solid #b8b8b8;
  border-bottom: 2px solid #b8b8b8;
  display: grid;
  grid-template-columns: 17px 45px 19px 47px 19px 47px 17px 48px 20px 46px;
  grid-template-rows: 20px;
  align-items: start;
}
.coord-box span {
  text-align: center;
  line-height: 16px;
}
.coord-box span:first-child {
  padding-right: 5px;
}
.coord-val {
  height: 20px;
  background: #c8c8c8;
  padding-left: 2px;
  font-size: 13px;
  line-height: 20px;
  overflow: hidden;
  white-space: nowrap;
}

.jog-row {
  display: flex;
  margin: 6px 0 0 27px;
}
.jog-pad {
  width: 239px;
  height: 168px;
  border: 3px double #d0d0d0;
  outline: 1px solid #7c7c7c;
  outline-offset: -1px;
  display: flex;
  padding: 1px 0 0 1px;
}
.jog {
  width: 32px;
  height: 32px;
  background: linear-gradient(135deg, #84d0f2, #48a8de 45%, #1c86c8);
  border: 1px solid #1478b8;
  flex: none;
}
.jog svg {
  display: block;
  width: 30px;
  height: 30px;
}
.jog .down { transform: rotate(180deg); }
.jog .left { transform: rotate(-90deg); }
.jog .right { transform: rotate(90deg); }
.jog-cross {
  width: 165px;
  flex: none;
  display: grid;
  grid-template-columns: 33px 33px 34px 33px 32px;
  grid-template-rows: 32px 32px 31px 31px 32px;
}
.jog-n2 { grid-area: 1 / 3; }
.jog-n1 { grid-area: 2 / 3; }
.jog-w2 { grid-area: 3 / 1; }
.jog-w1 { grid-area: 3 / 2; }
.jog-e1 { grid-area: 3 / 4; }
.jog-e2 { grid-area: 3 / 5; }
.jog-s1 { grid-area: 4 / 3; }
.jog-s2 { grid-area: 5 / 3; }
.jog-col {
  margin: 3px 0 0 34px;
  display: flex;
  flex-direction: column;
}
.jog-gap {
  height: 29px;
  flex: none;
}
.jog-strip {
  width: 39px;
  height: 172px;
  margin: -2px 0 0 12px;
  background: #a4a4a4;
  border: 3px solid;
  border-color: #8e8e8e #a4a4a4 #a4a4a4 #8e8e8e;
  box-shadow: 1px 1px 0 #b8b8b8;
  display: flex;
  flex-direction: column;
  align-items: center;
  padding-top: 1px;
}
.jog-strip .jog {
  margin-bottom: 1px;
}
.jog-strip-2 {
  margin-left: 11px;
}
.strip-mid {
  width: 32px;
  height: 31px;
  background: #e0e0e0;
  flex: none;
}
.speed-row {
  display: flex;
  margin-top: 5px;
}
.speed {
  display: flex;
  flex-direction: column;
}
.speed-high {
  width: 78px;
  margin-left: 55px;
}
.speed-low {
  width: 64px;
  margin-left: 66px;
}
.speed-label {
  line-height: 14px;
  white-space: nowrap;
}
.speed-high .speed-label {
  margin-left: 15px;
}
.speed-low .speed-label {
  margin-left: -13px;
}
.speed-input {
  display: flex;
  margin-top: 4px;
}
.speed-field {
  flex: 1;
  height: 27px;
  background: #fff;
  border: 2px solid #a4a4a4;
  border-top: 4px solid #8e8e8e;
  border-bottom-width: 3px;
  line-height: 19px;
  padding-left: 1px;
}

/* bottom action row */
.actionbar {
  height: 80px;
  background: #3f454f;
  border-top: 1px solid #262a31;
  padding-top: 1px;
}
.action-line {
  height: 2px;
  margin-left: 28px;
  background: #d4d4d4;
}
.action-box {
  width: 1052px;
  height: 49px;
  margin: 11px 0 0 15px;
  display: grid;
  grid-template-columns: 97px 106px 105px 88px 102px 106px 81px 83px 83px 101px 97px;
  border-top: 3px solid #1b1f25;
  border-left: 3px solid #1b1f25;
  border-bottom: 1px solid #4c525d;
}
.action {
  display: flex;
  align-items: center;
  justify-content: center;
  background: linear-gradient(#8d939e, #6f7783);
  border-right: 1px solid #5f5f5f;
  color: #f4f4f4;
  font-size: 18px;
  font-weight: 500;
  white-space: nowrap;
  overflow: hidden;
  padding-bottom: 3px;
}
.action:first-child {
  padding-right: 5px;
}

/* status line */
.statusbar {
  height: 27px;
  display: grid;
  grid-template-columns: 250px 616px 110px 128px 176px;
  background: #000;
  border-top: 2px solid #50545c;
}
.status {
  border-top: 2px solid #2a2d33;
  border-left: 2px solid #3a3d44;
  color: #58d800;
  font-size: 9px;
  padding-left: 3px;
  line-height: 20px;
}

/* windows taskbar */
.taskbar {
  height: 39px;
  display: flex;
  align-items: flex-start;
  background: linear-gradient(90deg, #7b8ea6 0, #a7c0da 80px, #a7c0da 975px, #7f90a6 1040px, #7f90a6 100%);
  border-top: 1px solid #dfe6ee;
}
.start-orb {
  margin: 0 0 0 8px;
  flex: none;
}
.ie-icon {
  margin: 2px 0 0 27px;
  flex: none;
}
.task-tile {
  height: 38px;
  background: linear-gradient(#bdd0e4, #a7c0da);
  border: 1px solid #6a7a90;
  border-radius: 3px;
  box-shadow: inset 0 0 0 1px #d8e4f0;
  display: flex;
  align-items: center;
  justify-content: center;
  flex: none;
}
.task-folder {
  width: 55px;
  margin-left: 14px;
}
.task-pdf {
  width: 59px;
  margin-left: 8px;
}
.task-lv {
  width: 51px;
  margin-left: 3px;
}
.task-end {
  width: 5px;
  height: 38px;
  margin-left: 1px;
  background: #bdd0e4;
  border: 1px solid #6a7a90;
  border-radius: 2px;
}
.pdf-icon {
  width: 32px;
  height: 32px;
  background: #f38220;
  color: #fff;
  font-size: 9px;
  font-weight: 700;
  line-height: 10px;
  display: flex;
  flex-direction: column;
  align-items: center;
}
.pdf-icon svg {
  display: block;
  flex: none;
}
.lv-num {
  font-family: "Liberation Sans", sans-serif;
  font-size: 8px;
  font-weight: 700;
  fill: #e8e8e8;
}
.help-q {
  font-family: "Liberation Sans", sans-serif;
  font-size: 11px;
  font-weight: 700;
  fill: #fff;
  text-anchor: middle;
}
.tray {
  margin-left: auto;
  height: 38px;
  display: flex;
  align-items: center;
  color: #f2f4f7;
}
.tray-lang {
  font-family: "Liberation Mono", monospace;
  font-size: 11px;
  color: #f2f4f7;
}
.tray svg {
  flex: none;
}
.tray svg:nth-of-type(1) { margin-left: 8px; }
.tray svg:nth-of-type(2) { margin-left: 7px; }
.tray svg:nth-of-type(3) { margin-left: 10px; }
.tray svg:nth-of-type(4) { margin-left: 9px; }
.tray svg:nth-of-type(5) { margin-left: 12px; }
.tray svg:nth-of-type(6) { margin-left: 9px; }
.tray svg:nth-of-type(7) { margin-left: 9px; }
.tray-clock {
  width: 76px;
  margin-left: 7px;
  text-align: center;
  font-size: 12px;
  line-height: 17px;
}
.show-desktop {
  width: 15px;
  height: 38px;
  background: #8496ac;
  border: 1px solid #5e6c80;
}
```
